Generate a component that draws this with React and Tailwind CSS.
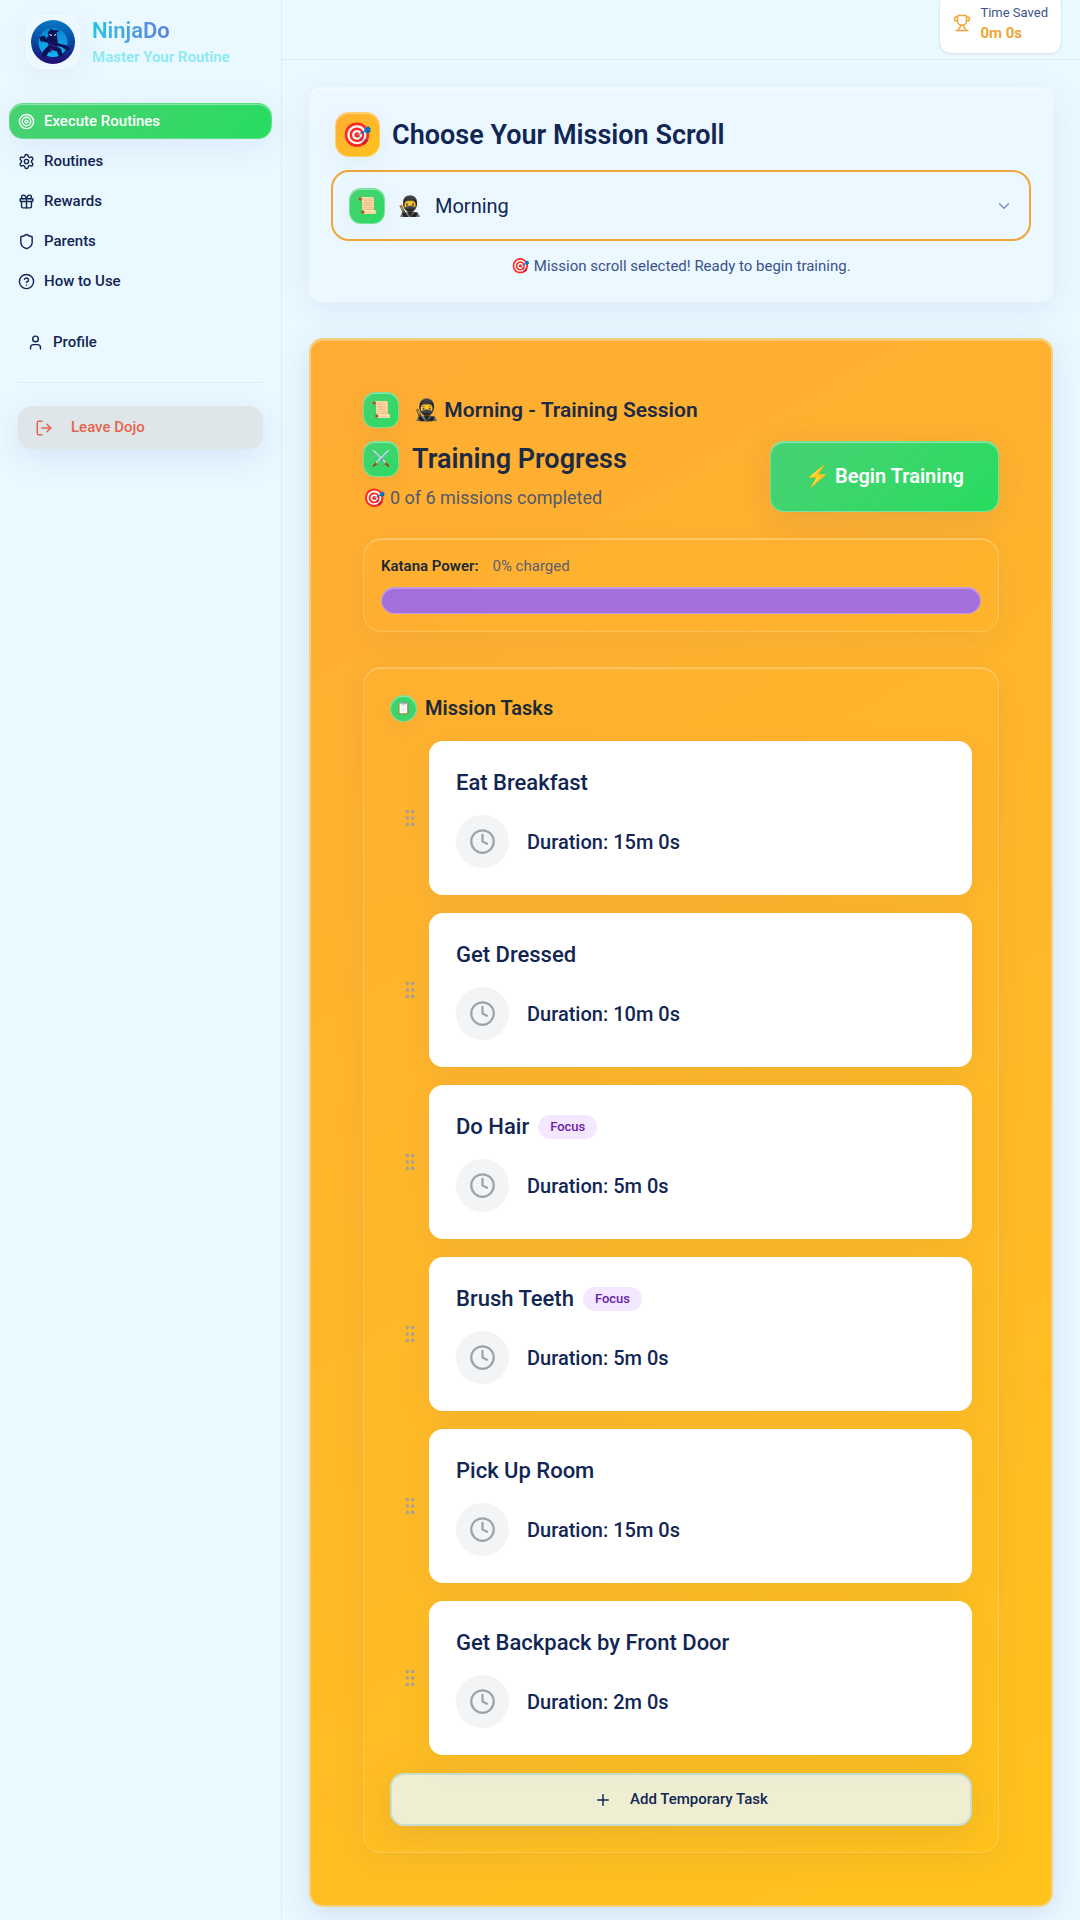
import React from "react";
import {
  Target,
  Settings,
  Gift,
  Shield,
  CircleHelp,
  User,
  LogOut,
  Trophy,
  ChevronDown,
  GripVertical,
  Clock,
  Plus,
} from "lucide-react";

const nav = [
  { label: "Execute Routines", icon: Target, active: true },
  { label: "Routines", icon: Settings },
  { label: "Rewards", icon: Gift },
  { label: "Parents", icon: Shield },
  { label: "How to Use", icon: CircleHelp },
];

const tasks = [
  { name: "Eat Breakfast", duration: "15m 0s" },
  { name: "Get Dressed", duration: "10m 0s" },
  { name: "Do Hair", duration: "5m 0s", focus: true },
  { name: "Brush Teeth", duration: "5m 0s", focus: true },
  { name: "Pick Up Room", duration: "15m 0s" },
  { name: "Get Backpack by Front Door", duration: "2m 0s" },
];

function Logo() {
  return (
    <svg viewBox="0 0 44 44" className="size-11" aria-hidden="true">
      <defs>
        <linearGradient id="logoRing" x1="0" y1="0" x2="0" y2="1">
          <stop offset="0" stopColor="#0879c4" />
          <stop offset="0.5" stopColor="#0647a0" />
          <stop offset="1" stopColor="#220a72" />
        </linearGradient>
        <linearGradient id="logoSky" x1="0" y1="0" x2="0" y2="1">
          <stop offset="0" stopColor="#0786d2" />
          <stop offset="1" stopColor="#12b4f4" />
        </linearGradient>
      </defs>
      <circle cx="22" cy="22" r="22" fill="url(#logoRing)" />
      <circle cx="22" cy="22.500" r="14.500" fill="url(#logoSky)" />
      <g fill="#0d1257">
        <path d="M17 12.500 L20 8.500 L22 10 L29 10.500 L25.500 12.500 L26 16 L22 18.500 L17.500 17 Z" />
        <path d="M16 17 L26 16 L27 23 L32 25 L30 27 L26 26 L24 28 L18 28 L17 23 L11 21 L9 17.500 L12 15.500 L16 19 Z" />
        <path d="M17 26 L25 26 L30 29 L32 36 L28 37 L26 31.500 L21 30 L17 33 L15 37 L11 36 L12 31 Z" />
        <path d="M8 17 L14 16 L15 20 L10 22 Z M27 24 L35 25 L39 29 L37 31 L32 28 Z" />
      </g>
      <path d="M18.500 14.500 L21 15.500 M25 14.500 L23 15.500" stroke="#fff" strokeWidth="1" />
      <path d="M18 24 L25 27 M20 28 L20 33" stroke="#5a1c98" strokeWidth="1" />
    </svg>
  );
}

function Tile({ children, className }) {
  return (
    <span
      aria-hidden="true"
      className={
        "flex shrink-0 items-center justify-center border border-white/30 shadow-[0_8px_24px_rgba(31,60,160,0.05),inset_0_1px_0_rgba(255,255,255,0.4)] " +
        className
      }
    >
      {children}
    </span>
  );
}

const greenTile = "size-9 rounded-xl bg-linear-135 from-[#45d272] to-[#2bd964] text-base";

function Sidebar() {
  return (
    <aside className="w-[282px] shrink-0 border-r border-[#dcecf5]">
      <div className="flex items-center gap-3 pt-[15px] pl-[26px]">
        <div className="flex size-[54px] items-center justify-center rounded-2xl border border-white/30 bg-white/5 shadow-[0_8px_32px_rgba(31,60,160,0.06)]">
          <Logo />
        </div>
        <div className="pt-0.5">
          <p className="w-fit bg-linear-to-r from-[#22c4e6] to-[#5b7be0] bg-clip-text text-[22px] leading-7 font-semibold text-transparent">
            NinjaDo
          </p>
          <p className="text-[15px] leading-6 font-semibold text-[#8beaf2]">Master Your Routine</p>
        </div>
      </div>
      <nav className="mt-[34px] px-[9px]">
        <ul className="flex flex-col gap-1">
          {nav.map(({ label, icon: Icon, active }) => (
            <li key={label}>
              <a
                href="#"
                aria-current={active ? "page" : undefined}
                className={
                  "flex h-9 items-center gap-[9px] rounded-[14px] border px-2 text-[15px] font-medium " +
                  (active
                    ? "border-white/20 bg-linear-135 from-[#47d173] to-[#26dc60] text-white shadow-[0_8px_32px_rgba(31,60,160,0.08),inset_0_1px_0_rgba(255,255,255,0.4)]"
                    : "border-transparent text-[#122653]")
                }
              >
                <Icon className="size-[17px]" strokeWidth={2} />
                {label}
              </a>
            </li>
          ))}
        </ul>
      </nav>
      <div className="mt-[25px] px-[18px]">
        <a href="#" className="flex h-9 items-center gap-[9px] px-[9px] text-[15px] font-medium text-[#122653]">
          <User className="size-[17px]" />
          Profile
        </a>
        <hr className="mt-[22px] border-[#dcecf5]" />
        <button
          type="button"
          className="mt-[23px] flex h-[43px] w-full items-center gap-[18px] rounded-[14px] border border-[#e4e4e2]/60 bg-[#dfe6ea] px-4 text-[15px] font-medium text-[#e5654b] shadow-[0_8px_32px_rgba(31,60,160,0.1)]"
        >
          <LogOut className="size-[18px]" strokeWidth={2} />
          Leave Dojo
        </button>
      </div>
    </aside>
  );
}

function Header() {
  return (
    <header className="flex h-[60px] items-start justify-end border-b border-[#dcecf5] pr-[18px]">
      <div className="-mt-2 flex h-[62px] items-center gap-[9px] rounded-xl border border-[#dfe9f2] bg-white px-[13px] shadow-xs">
        <Trophy className="size-[18px] text-[#eda63a]" />
        <div className="pt-0.5">
          <p className="text-[13px] leading-[18px] text-[#3a5288]">Time Saved</p>
          <p className="text-[15px] leading-[22px] font-bold text-[#eda63a]">0m 0s</p>
        </div>
      </div>
    </header>
  );
}

function MissionPicker() {
  return (
    <section className="rounded-xl border border-white/20 bg-[#ebf8ff] px-[21px] pt-6 pb-[21px] shadow-[0_8px_32px_rgba(31,60,160,0.08),inset_0_1px_0_rgba(255,255,255,0.5)]">
      <div className="flex items-center gap-3 pl-1">
        <Tile className="size-[45px] rounded-[14px] bg-linear-135 from-[#ffac33] to-[#ffc31c] text-2xl">🎯</Tile>
        <h1 className="text-[27px] leading-9 font-semibold text-[#122653]">
          <label htmlFor="mission">Choose Your Mission Scroll</label>
        </h1>
      </div>
      <div className="mt-[13px] flex h-[71px] items-center rounded-[18px] border-2 border-[#efa63a] px-4">
        <Tile className={greenTile}>📜</Tile>
        <span aria-hidden="true" className="ml-3 w-[38px] text-xl">🥷</span>
        <select id="mission" defaultValue="morning" className="min-w-0 flex-1 appearance-none bg-transparent text-xl text-[#122653] outline-none">
          <option value="morning">Morning</option>
        </select>
        <ChevronDown className="size-[18px] text-[#7c90b4]" aria-hidden="true" />
      </div>
      <p className="mt-[11px] text-center text-[15px] leading-7 text-[#3a5288]">
        🎯 Mission scroll selected! Ready to begin training.
      </p>
    </section>
  );
}

const panel =
  "rounded-[18px] border border-white/20 shadow-[0_8px_32px_rgba(31,60,160,0.06),inset_0_1px_0_rgba(255,255,255,0.3)]";

function TaskRow({ task }) {
  return (
    <li className="flex items-center">
      <button type="button" aria-label={"Reorder " + task.name} className="flex w-[39px] justify-center text-[#a9a38f]">
        <GripVertical className="size-[22px]" />
      </button>
      <article className="flex-1 rounded-[14px] bg-white px-[27px] pt-[26px] pb-[27px] shadow-[0_8px_32px_rgba(31,60,160,0.06)]">
        <div className="flex h-[31px] items-center gap-[9px]">
          <h3 className="text-[22px] font-medium text-[#122653]">{task.name}</h3>
          {task.focus && (
            <span className="rounded-full bg-[#f3e8ff] px-3 text-[13px] leading-6 font-medium text-[#6b21a8]">
              Focus
            </span>
          )}
        </div>
        <div className="mt-[17px] flex items-center gap-[18px]">
          <span className="flex size-[53px] items-center justify-center rounded-full bg-[#f3f4f6]">
            <Clock className="size-[27px] text-[#9ca3af]" />
          </span>
          <p className="text-xl font-medium text-[#122653]">Duration: {task.duration}</p>
        </div>
      </article>
    </li>
  );
}

function Training() {
  return (
    <section className="mt-9 rounded-[14px] border-2 border-[#f2d27c] bg-linear-150 from-[#ffac33] to-[#ffc31a] px-[52px] pt-[52px] pb-[52px] shadow-[0_8px_32px_rgba(31,60,160,0.12),inset_0_1px_0_rgba(255,255,255,0.3)]">
      <h2 className="flex items-center gap-[14px] text-[21px] leading-9 font-semibold text-[#1c2a44]">
        <Tile className={greenTile}>📜</Tile>
        <span>🥷 Morning - Training Session</span>
      </h2>
      <div className="mt-[13px] flex items-start justify-between">
        <div>
          <h2 className="flex items-center gap-[13px] text-[27px] leading-9 font-semibold text-[#1c2a44]">
            <Tile className={greenTile}>⚔️</Tile>
            Training Progress
          </h2>
          <p className="mt-[7px] text-lg leading-7 text-[#52596b]">🎯 0 of 6 missions completed</p>
        </div>
        <button
          type="button"
          className="h-[71px] rounded-[14px] border border-white/30 bg-linear-135 from-[#47d173] to-[#26dc60] px-[34px] pb-0.5 text-xl font-semibold text-white shadow-[0_8px_32px_rgba(31,60,160,0.1),inset_0_1px_0_rgba(255,255,255,0.4)]"
        >
          ⚡ Begin Training
        </button>
      </div>

      <div className={"mt-[26px] px-[17px] pt-[15px] pb-[17px] " + panel}>
        <p className="flex gap-[14px] text-[15px] leading-6">
          <span className="font-semibold text-[#1c2a33]">Katana Power:</span>
          <span className="text-[#5b6070]">0% charged</span>
        </p>
        <div
          role="progressbar"
          aria-label="Katana Power"
          aria-valuenow={0}
          className="mt-[9px] h-[27px] rounded-full border border-white/30 bg-[#a56fdb] shadow-[inset_0_1px_0_rgba(255,255,255,0.3)]"
        />
      </div>

      <div className={"mt-[35px] p-[26px] " + panel}>
        <h2 className="flex items-center gap-2 text-xl leading-7 font-semibold text-[#1c2a33]">
          <Tile className="size-[27px] rounded-full bg-[#3bd56c] text-xs">📋</Tile>
          Mission Tasks
        </h2>
        <ul className="mt-[19px] flex flex-col gap-[18px]">
          {tasks.map((t) => (
            <TaskRow key={t.name} task={t} />
          ))}
        </ul>
        <button
          type="button"
          className="mt-[18px] flex h-[53px] w-full items-center justify-center gap-[18px] rounded-[14px] border-2 border-[#c9dcd0] bg-[#efedd2] text-[15px] font-medium text-[#122653] shadow-[0_8px_32px_rgba(31,60,160,0.1)]"
        >
          <Plus className="size-[18px]" />
          Add Temporary Task
        </button>
      </div>
    </section>
  );
}

export default function App() {
  return (
    <div className="flex min-h-screen bg-[#eaf8ff] font-['Roboto','Noto_Color_Emoji',sans-serif]">
      <Sidebar />
      <div className="min-w-0 flex-1">
        <Header />
        <main className="px-[27px] pt-[27px] pb-[13px]">
          <MissionPicker />
          <Training />
        </main>
      </div>
    </div>
  );
}
